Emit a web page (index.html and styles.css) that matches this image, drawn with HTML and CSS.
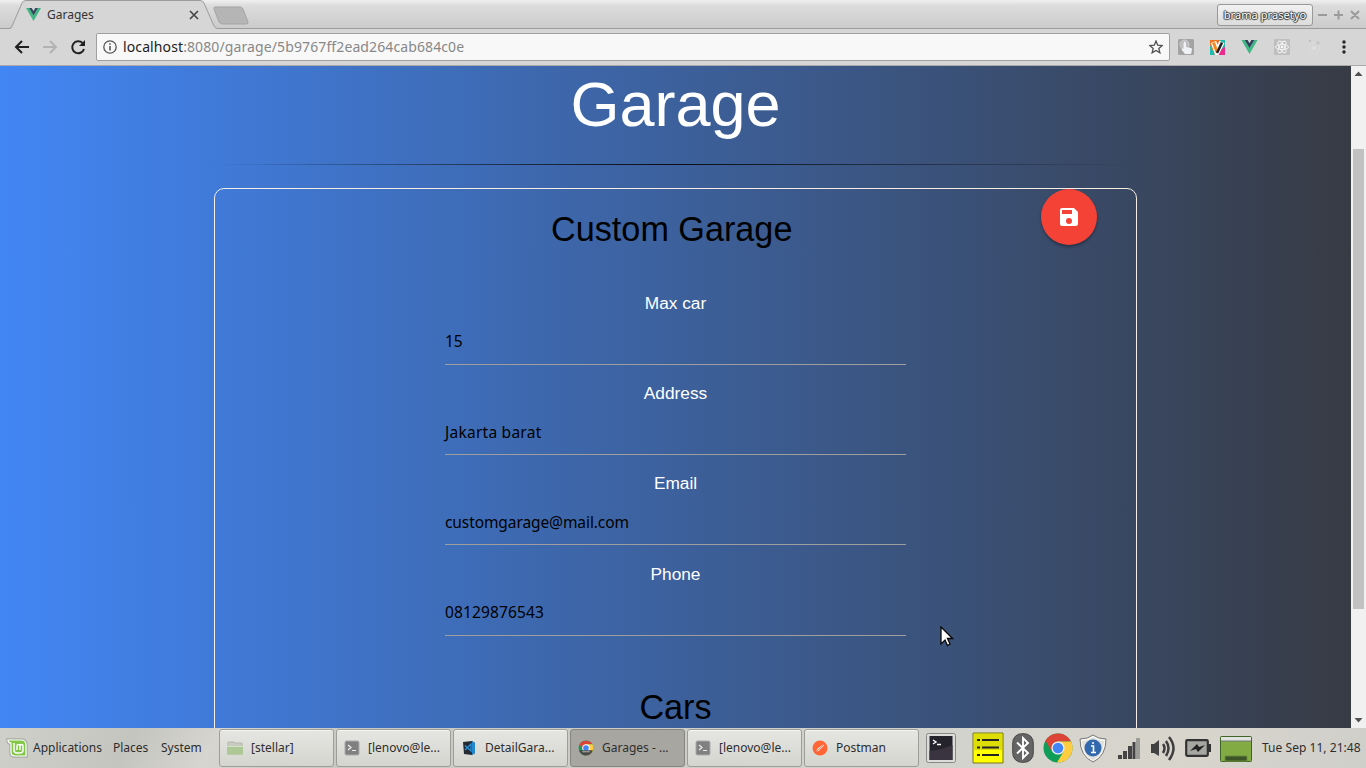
FILE: index.html
```html
<!DOCTYPE html>
<html lang="en">
<head>
<meta charset="utf-8">
<title>Garages</title>
<link rel="stylesheet" href="styles.css">
</head>
<body>
<div class="desktop">
  <header class="tabstrip">
    <svg class="tab-shape" width="260" height="29" viewBox="0 0 260 29">
      <path d="M0 29V28.500H10C12 28.500 12.500 27 13 25L22 3Q23 .5 26 .5H201Q203 .5 204 3L214 26Q215 28.500 218 28.500H260V29Z" fill="#d6d6d6"/>
      <path d="M0 28.500H9Q11.500 28.500 12.500 25L22 3Q23 .5 26 .5H200Q203 .5 204 3L214 26Q215 28.500 218 28.500H260" fill="none" stroke="#9c9c9c"/>
      <path d="M215 7H240Q242 7 243 9L248 22Q248.500 24 246 24H223Q220 24 219 22L214 9Q213.500 7 215 7Z" fill="#b5b5b5" stroke="#a5a5a5"/>
    </svg>
    <div class="tab">
      <svg width="15" height="13" viewBox="0 0 30 26"><path d="M0 0H6L15 15L24 0H30L15 26Z" fill="#41b883"/><path d="M6 0H11.500L15 6L18.500 0H24L15 15Z" fill="#35495e"/></svg>
      <span class="tab-title">Garages</span>
      <svg width="10" height="10" viewBox="0 0 10 10"><path d="M1 1L9 9M9 1L1 9" stroke="#484848" stroke-width="1.700"/></svg>
    </div>
    <div class="win">
      <span class="user">brama prasetyo</span>
      <svg width="44" height="12" viewBox="0 0 44 12"><path d="M1 6H10M17 6H26M21.500 1.500V10.500M34 2L42 10M42 2L34 10" stroke="#9b9b9b" stroke-width="2"/></svg>
    </div>
  </header>
  <nav class="toolbar">
    <svg class="nav-icons" width="74" height="18" viewBox="0 0 74 18" fill="none" stroke-width="2">
      <path d="M15 9H2M8 3L2 9L8 15" stroke="#202020"/>
      <path d="M29 9H42M36 3L42 9L36 15" stroke="#b3b3b3"/>
      <path d="M68.500 5A6 6 0 1 0 70 11" stroke="#202020"/><path d="M71 2V8H65Z" fill="#202020"/>
    </svg>
    <div class="address">
      <svg width="14" height="14" viewBox="0 0 14 14"><circle cx="7" cy="7" r="6.200" fill="none" stroke="#555" stroke-width="1.300"/><path d="M7 6V10.500M7 3.200V4.800" stroke="#555" stroke-width="1.600"/></svg>
      <span class="url">localhost<span class="path">:8080/garage/5b9767ff2ead264cab684c0e</span></span>
      <svg width="14" height="14" viewBox="0 0 14 14"><path d="M7 1L8.700 5.200L13.200 5.500L9.800 8.400L10.900 12.800L7 10.400L3.100 12.800L4.200 8.400L.8 5.500L5.300 5.200Z" fill="none" stroke="#505050" stroke-width="1.300"/></svg>
    </div>
    <div class="extensions">
      <svg width="16" height="16" viewBox="0 0 16 16"><rect width="16" height="16" rx="1.500" fill="#a3a3a3"/><circle cx="6.500" cy="5.500" r="4.500" fill="#bcbcbc" stroke="#cfcfcf"/><path d="M5.500 4.500Q7 0 8 4.500V8L13 9Q14 9 14 10.500L13 15H7L3.500 10.500Q3 9 5.500 10Z" fill="#f0f3f6"/></svg>
      <svg width="15" height="15" viewBox="0 0 15 15"><rect width="15" height="15" fill="#ef7526"/><path d="M9 0H15V7L10 13Z" fill="#20b8a8"/><path d="M0 5L5 15H0Z" fill="#1dbbb0"/><path d="M10 10L15 7V15H8Z" fill="#e9298c"/><path d="M3.500 2L7 12L12 2" fill="none" stroke="#fff" stroke-width="5.500"/><path d="M3.500 2.500L7 12" stroke="#f3881f" stroke-width="3"/><path d="M7 13L12 2.500" stroke="#222" stroke-width="2.600"/></svg>
      <svg width="17" height="14" viewBox="0 0 30 26"><path d="M0 0H6L15 15L24 0H30L15 26Z" fill="#41b883"/><path d="M6 0H11.500L15 6L18.500 0H24L15 15Z" fill="#303e5a"/></svg>
      <svg width="16" height="16" viewBox="0 0 16 16"><rect width="16" height="16" rx="1" fill="#bfbfbf"/><g fill="none" stroke="#f2f2f2"><ellipse cx="8" cy="8" rx="6.500" ry="2.600"/><ellipse cx="8" cy="8" rx="6.500" ry="2.600" transform="rotate(60 8 8)"/><ellipse cx="8" cy="8" rx="6.500" ry="2.600" transform="rotate(120 8 8)"/></g><circle cx="8" cy="8" r="1.300" fill="#fff"/></svg>
      <svg width="16" height="16" viewBox="0 0 16 16"><circle cx="8" cy="9" r="5.500" fill="none" stroke="#dcdcdc"/><circle cx="8" cy="9" r="2" fill="#dedede"/><circle cx="4" cy="2" r="1.300" fill="#c4c4c4"/><circle cx="12" cy="4" r="1.800" fill="#c6c6c6"/></svg>
      <svg class="more" width="16" height="16" viewBox="0 0 16 16" fill="#242424"><circle cx="8" cy="3" r="1.700"/><circle cx="8" cy="8" r="1.700"/><circle cx="8" cy="13" r="1.700"/></svg>
    </div>
  </nav>
  <div class="viewport">
    <main class="page">
      <h1>Garage</h1>
      <div class="rule"></div>
      <section class="panel">
        <button class="save" aria-label="Save"><svg width="24" height="24" viewBox="0 0 24 24"><path fill="#fff" d="M17 3H5a2 2 0 0 0-2 2v14a2 2 0 0 0 2 2h14c1.100 0 2-.9 2-2V7l-4-4zm-5 16a3 3 0 1 1 0-6 3 3 0 0 1 0 6zm3-10H5V5h10v4z"/></svg></button>
        <h2 class="name">Custom Garage</h2>
        <div class="fields">
          <div class="field"><label>Max car</label><div class="value">15</div></div>
          <div class="field"><label>Address</label><div class="value wide">Jakarta barat</div></div>
          <div class="field"><label>Email</label><div class="value tight">customgarage@mail.com</div></div>
          <div class="field"><label>Phone</label><div class="value digits">08129876543</div></div>
        </div>
        <h2 class="cars">Cars</h2>
      </section>
    </main>
    <div class="scrollbar">
      <svg width="15" height="15" viewBox="0 0 15 15"><path d="M3.500 10L7.500 5.500L11.500 10Z" fill="#505050"/></svg>
      <div class="thumb"></div>
      <svg width="15" height="15" viewBox="0 0 15 15"><path d="M3.500 5L7.500 9.500L11.500 5Z" fill="#505050"/></svg>
    </div>
  </div>
  <footer class="panelbar">
    <div class="menus">
      <svg width="22" height="20" viewBox="0 0 22 20"><path d="M1 1H15Q21 1 21 7V19H9Q4 19 4 14V6Q1 6 1 1Z" fill="#8fce4e" stroke="#aaa" stroke-width="1.500"/><path d="M2 2H15Q20 2 20 7V18H9Q5 18 5 14V5Q2 5 2 2Z" fill="#83c748" stroke="#fff" stroke-width="1.200"/><path d="M8 5V12Q8 15 11 15H14Q17 15 17 12V8Q17 6.500 15.500 6.500T14 8V12M14 8Q14 6.500 12.500 6.500T11 8V12" fill="none" stroke="#fff" stroke-width="1.500"/></svg>
      <span class="m1">Applications</span><span class="m2">Places</span><span class="m3">System</span>
    </div>
    <div class="tasks">
      <div class="task"><svg width="16" height="16" viewBox="0 0 16 16"><path d="M1 2H7L8 3H15V14H1Z" fill="#c8ccc0" stroke="#b5b8ae"/><path d="M0 6H16V14.500H0Z" fill="#adc795"/><path d="M0 6.500H16" stroke="#d5e2c9"/></svg><span>[stellar]</span></div>
      <div class="task"><svg width="16" height="16" viewBox="0 0 16 16"><rect x="1" y="1" width="14" height="14" rx="1.500" fill="#808080" stroke="#aaa"/><path d="M4 5L7 7.500L4 10M8 10.500H12" fill="none" stroke="#eee" stroke-width="1.200"/></svg><span>[lenovo@le...</span></div>
      <div class="task"><svg width="16" height="16" viewBox="0 0 16 16"><path d="M2 2L11 1L14 3V13L11 15L3 14Z" fill="#252b33"/><path d="M11 1L14 3V13L11 15Z" fill="#2188ce"/><path d="M4 5.500L10 11V4L4 10" fill="none" stroke="#2692dc" stroke-width="1.300"/></svg><span>DetailGara...</span></div>
      <div class="task active"><svg width="16" height="16" viewBox="0 0 30 30"><circle cx="15" cy="15" r="14" fill="#179b5a"/><path d="M3 8A14 14 0 0 1 27 8H15L9 18Z" fill="#dc4437"/><path d="M15 8H27A14 14 0 0 1 15 29L21 18Z" fill="#ffce43"/><circle cx="15" cy="15" r="7" fill="#fff"/><circle cx="15" cy="15" r="5.300" fill="#4285f4"/><path d="M2 19H28Q24 29 15 29T2 19" fill="#4a4a48"/><path d="M8 22H22" stroke="#aaa" stroke-width="2"/></svg><span>Garages - ...</span></div>
      <div class="task"><svg width="16" height="16" viewBox="0 0 16 16"><rect x="1" y="1" width="14" height="14" rx="1.500" fill="#808080" stroke="#aaa"/><path d="M4 5L7 7.500L4 10M8 10.500H12" fill="none" stroke="#eee" stroke-width="1.200"/></svg><span>[lenovo@le...</span></div>
      <div class="task"><svg width="16" height="16" viewBox="0 0 16 16"><circle cx="8" cy="8" r="7.500" fill="#ff6535"/><path d="M4 12L5.500 8.500L11 4.500L12 5.500L7 10.500Z" fill="#ffe9df"/><path d="M4 12L11 5" stroke="#db6b4d" stroke-width=".7"/></svg><span>Postman</span></div>
    </div>
    <div class="tray">
      <svg class="t-term" width="30" height="30" viewBox="0 0 30 30"><rect x=".5" y=".5" width="29" height="29" rx="2" fill="#dcdcd8" stroke="#888"/><rect x="3.500" y="3" width="23" height="24" fill="#24222a"/><path d="M3.500 18Q15 17 26.500 12V27H3.500Z" fill="#39343f"/><path d="M7 7L10 9L7 11M11 11.500H15" fill="none" stroke="#fff" stroke-width="1.400"/></svg>
      <svg class="t-note" width="32" height="32" viewBox="0 0 32 32"><path d="M1 1H31V31H1Z" fill="#ff0" stroke="#77751c"/><path d="M2 2H30V18H2Z" fill="#dddd08"/><path d="M10 8H27M10 15.500H27M10 23H27M5 8H8M5 15.500H8M5 23H8" stroke="#252525" stroke-width="2"/></svg>
      <svg class="t-bt" width="22" height="30" viewBox="0 0 22 30"><rect x=".7" y=".7" width="20.600" height="28.600" rx="9" fill="#646464" stroke="#484848"/><path d="M5 9.500L16 20L11 25V5L16 10L5 20.500" fill="none" stroke="#fff" stroke-width="1.900"/></svg>
      <svg class="t-chrome" width="30" height="30" viewBox="0 0 30 30"><circle cx="15" cy="15" r="14.500" fill="#0f9d58"/><path d="M2.500 7.700A14.500 14.500 0 0 1 28 8.500H15L8.500 18Z" fill="#db4437"/><path d="M15 8.500H28A14.500 14.500 0 0 1 14 29.500L21 18Z" fill="#ffcd40"/><circle cx="15" cy="15" r="6.600" fill="#f1f1f1"/><circle cx="15" cy="15" r="5.300" fill="#4285f4"/></svg>
      <svg class="t-shield" width="28" height="29" viewBox="0 0 28 29"><path d="M14 1Q19 5 27 5Q27 22 14 28Q1 22 1 5Q9 5 14 1Z" fill="#f5f5f1" stroke="#777"/><path d="M14 3Q19 7 25 7Q24 21 14 26Q4 21 3 7Q9 7 14 3Z" fill="#dedfdb"/><circle cx="14" cy="14" r="8.500" fill="#3268ad"/><path d="M12 12H14.500V18.500M12 18.500H17M13 9H15" fill="none" stroke="#fff" stroke-width="1.600"/></svg>
      <svg class="t-signal" width="22" height="21" viewBox="0 0 22 21"><path d="M0 17H4V21H0ZM5 13H9V21H5ZM10 8H14V21H10ZM14.500 4H17.500V21H14.500Z" fill="#444"/><path d="M18 0H22V21H18Z" fill="#9c9c98"/></svg>
      <svg class="t-volume" width="27" height="25" viewBox="0 0 27 25"><path d="M1 8H4L9 4V20L4 17H1Z" fill="#424242"/><path d="M13 8Q16 12 13 17M16 5Q21 12 16 20M19 1Q28 12 19 24" fill="none" stroke="#3e3e3e" stroke-width="2.500"/></svg>
      <svg class="t-battery" width="27" height="18" viewBox="0 0 27 18"><rect x="1.200" y="1.200" width="21.600" height="15.600" rx="1" fill="#a7a7a2" stroke="#333" stroke-width="2.200"/><path d="M23 5H26V13H23Z" fill="#333"/><path d="M5 12L12 5L14 8L20 6L13 13L11 10Z" fill="#222"/></svg>
      <svg class="t-desktop" width="32" height="26" viewBox="0 0 32 26"><rect x=".5" y=".5" width="31" height="25" rx="1" fill="#82ab44" stroke="#416326"/><rect x="1" y="1" width="30" height="4" fill="#e1e3df"/><path d="M1 5H31" stroke="#707678"/><path d="M5 20H27V25H5Z" fill="#3d5328" stroke="#688d3b"/></svg>
      <span class="clock">Tue Sep 11, 21:48</span>
    </div>
  </footer>
  <svg class="cursor" width="14" height="21" viewBox="0 0 14 21"><path d="M1 1V18L5 14L7.500 19.500L10 18L7.500 12.500H12.500Z" fill="#fff" stroke="#080808" stroke-width="1.300"/></svg>
</div>
</body>
</html>
```
FILE: styles.css
```css
* { box-sizing: border-box; }
body { margin: 0; overflow: hidden; font-family: "Noto Sans", sans-serif; }
svg { display: block; flex: none; }
.desktop { position: relative; width: 1366px; height: 768px; display: flex; flex-direction: column; }

.tabstrip { height: 29px; display: flex; justify-content: space-between; position: relative; background: linear-gradient(#f0f0f0, #dcdcdc 20%, #cbcbcb); border-bottom: 1px solid #9c9c9c; flex: none; }
.tab-shape { position: absolute; left: 0; top: 0; }
.tab { position: relative; display: flex; align-items: center; width: 200px; padding: 1px 0 0 26px; }
.tab-title { font-size: 12px; color: #333; width: 148px; padding-left: 6px; }
.win { display: flex; align-items: center; gap: 4px; padding: 1px 5px 0 0; }
.user { width: 96px; height: 22px; border: 1px solid #999; border-radius: 3px; background: linear-gradient(#f2f2f2, #dcdcdc); font-size: 11px; letter-spacing: 0.08px; line-height: 20px; text-align: center; white-space: nowrap; color: #fff; text-shadow: -1px 0 1px #333, 1px 0 1px #333, 0 -1px 1px #333, 0 1px 1px #333; }

.toolbar { height: 37px; flex: none; background: #d6d6d6; border-bottom: 1px solid #aaa; display: flex; align-items: center; padding-left: 14px; }
.address { width: 1074px; height: 28px; margin-left: 8px; border: 1px solid #a0a0a0; border-radius: 2px; background: #f8f8f8; display: flex; align-items: center; padding: 0 6px; }
.url { flex: 1; padding-left: 6px; font-size: 14px; letter-spacing: 0.11px; line-height: 26px; color: #222; }
.path { color: #888; }
.extensions { display: flex; align-items: center; gap: 16px; padding-left: 8px; }
.more { margin-left: -2px; }

.viewport { height: 662px; flex: none; display: flex; overflow: hidden; }
.page { width: 1351px; height: 662px; overflow: hidden; background: linear-gradient(to right, #4286f4, #373b44); font-family: "Liberation Sans", sans-serif; display: flex; flex-direction: column; align-items: center; }
h1, h2 { margin: 0; font-weight: 400; text-align: center; }
h1 { font-size: 63px; line-height: 70px; color: #fff; padding-top: 3px; height: 98px; flex: none; }
.rule { width: 930px; height: 1px; flex: none; background: linear-gradient(to right, transparent, #0a0d12, transparent); }
.panel { position: relative; width: 923px; height: 640px; flex: none; margin-top: 23px; border: 1px solid #f6eee4; border-radius: 10px; display: flex; flex-direction: column; align-items: center; }
.save { position: absolute; right: 39px; top: 0; width: 56px; height: 56px; border: 0; border-radius: 50%; padding: 0 1px 0 0; background: #f44336; box-shadow: 0 2px 3px #0005; display: flex; align-items: center; justify-content: center; }
h2 { font-size: 34.2px; line-height: 40px; color: #000; }
.name { padding: 20px 7.5px 0 0; }
.fields { width: 461px; padding-top: 25.25px; }
.field { height: 90.33px; display: flex; flex-direction: column; }
label { height: 43px; flex: none; padding-top: 17.5px; font-size: 17.3px; line-height: 22px; color: #fff; text-align: center; }
.value { height: 47.33px; flex: none; border-bottom: 1px solid #9e9e9e; font-family: "Noto Sans", sans-serif; font-size: 15.5px; line-height: 48.5px; color: #000; white-space: nowrap; }
.wide { letter-spacing: 0.25px; }
.tight { letter-spacing: -0.09px; }
.digits { letter-spacing: 0.14px; }
.cars { padding-top: 51.5px; }
.scrollbar { width: 15px; background: #f1f1f1; display: flex; flex-direction: column; }
.thumb { width: 11px; height: 460px; margin: 68px 2px 104px; background: #c1c1c1; flex: none; }

.panelbar { height: 40px; flex: none; background: linear-gradient(120deg, #d0d0cb, #c5c5c0 10%, #d6d5cf 16%, #c9c9c4 25%, #d3d3cd 70%, #d8d5cc 85%, #cfcfca); display: flex; align-items: center; font-size: 12px; color: #2e2e2e; }
.panelbar span { padding-bottom: 2px; }
.menus { display: flex; align-items: center; width: 219px; padding-left: 6px; white-space: nowrap; }
.m1 { width: 85px; padding-left: 5px; }
.m2 { width: 48px; }
.tasks { display: flex; gap: 2px; width: 702px; }
.task { width: 115px; height: 38px; border: 1px solid #9d9d99; border-radius: 3px; background: linear-gradient(#e5e5e2, #d5d5d0); box-shadow: inset 0 1px #f4f4f1; display: flex; align-items: center; gap: 8px; padding-left: 7px; white-space: nowrap; }
.active { background: #a8a6a0; border-color: #858581; box-shadow: none; }
.tray { display: flex; align-items: center; width: 445px; }
.t-term { margin-left: 5px; }
.t-note { margin-left: 16px; }
.t-bt { margin-left: 8px; }
.t-chrome { margin-left: 9px; }
.t-shield { margin-left: 6px; }
.t-signal { margin-left: 11px; }
.t-volume { margin-left: 10px; }
.t-battery { margin-left: 8px; }
.t-desktop { margin: 2px 0 0 8px; }
.clock { padding-left: 10px; letter-spacing: 0.04px; white-space: nowrap; }
.cursor { position: absolute; left: 940px; top: 626px; }
```
